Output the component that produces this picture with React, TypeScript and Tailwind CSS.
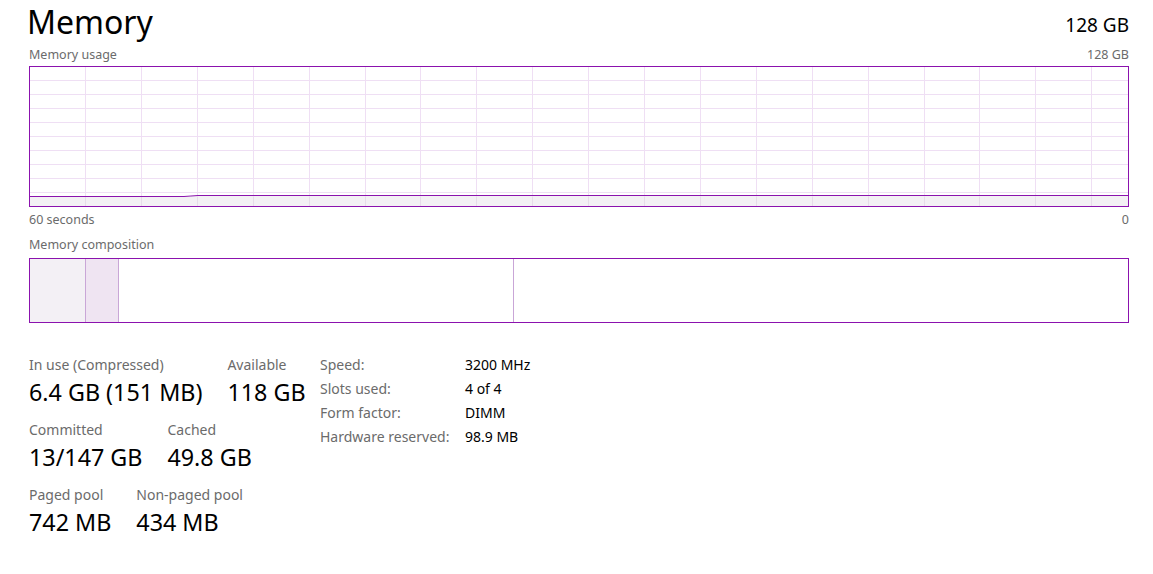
const FONT = "font-['Segoe_UI','Noto_Sans',sans-serif]";

function UsageChart() {
  const vLines = Array.from({ length: 19 }, (_, i) => 55.5 + Math.round(i * 55.9));
  const hLines = Array.from({ length: 9 }, (_, i) => 13.5 + i * 14);
  return (
    <svg
      width="1098"
      height="139"
      viewBox="0 0 1098 139"
      className="block"
      shapeRendering="crispEdges"
    >
      {/* fill below the usage line */}
      <path d="M0 130 L154 130 L168 129 L1098 129 L1098 139 L0 139 Z" fill="#f3f0f4" />
      {hLines.map((y) => (
        <line key={y} x1="0" x2="1098" y1={y} y2={y} stroke="#efdff4" strokeWidth="1" />
      ))}
      {vLines.map((x) => (
        <line key={x} x1={x} x2={x} y1="0" y2="139" stroke="#efdff4" strokeWidth="1" />
      ))}
      {vLines.map((x) => (
        <line key={`f${x}`} x1={x} x2={x} y1="130" y2="139" stroke="#e6dce9" strokeWidth="1" />
      ))}
      <path
        d="M0 129.5 L154 129.5 L168 128.5 L1098 128.5"
        fill="none"
        stroke="#8b12ae"
        strokeWidth="1"
        shapeRendering="auto"
      />
    </svg>
  );
}

function Stat({ label, value }: { label: string; value: string }) {
  return (
    <div className="flex flex-col">
      <div className="h-[24px] text-[14px] leading-[24px] text-[#6b6b6b] whitespace-nowrap">{label}</div>
      <div className="h-[41px] text-[23.3px] leading-[30px] text-black whitespace-nowrap">{value}</div>
    </div>
  );
}

const SPECS = [
  ["Speed:", "3200 MHz"],
  ["Slots used:", "4 of 4"],
  ["Form factor:", "DIMM"],
  ["Hardware reserved:", "98.9 MB"],
];

export default function App() {
  return (
    <div className={`w-[1153px] h-[574px] bg-white pl-[29px] pr-[24px] ${FONT}`}>
      {/* Header */}
      <div className="flex items-end justify-between h-[44px]">
        <h1 className="text-[32px] leading-[44px] text-black -ml-[2px] -mt-[8px]">Memory</h1>
        <span className="text-[19px] leading-[30px] text-black mb-[4px]">128 GB</span>
      </div>

      <div className="flex justify-between h-[22px] text-[12.5px] leading-[21px] text-[#6b6b6b]">
        <span>Memory usage</span>
        <span>128 GB</span>
      </div>

      <div className="border border-[#8b12ae] h-[141px] overflow-hidden">
        <UsageChart />
      </div>

      <div className="flex justify-between h-[25px] text-[12.5px] leading-[25px] text-[#6b6b6b]">
        <span>60 seconds</span>
        <span>0</span>
      </div>

      <div className="h-[26px] text-[12.5px] leading-[25px] text-[#6b6b6b]">Memory composition</div>

      {/* Composition bar */}
      <div className="flex border border-[#8b12ae] h-[65px]">
        <div className="w-[55px] bg-[#f3f0f5]" />
        <div className="w-[33px] bg-[#efe4f2] border-l border-[#c9a6d7]" />
        <div className="w-[395px] border-l border-[#c9a6d7]" />
        <div className="flex-1 border-l border-[#c9a6d7]" />
      </div>

      {/* Stats */}
      <div className="flex mt-[30px]">
        <div className="w-[291px] flex flex-col">
          <div className="flex gap-[25px]">
            <Stat label="In use (Compressed)" value="6.4 GB (151 MB)" />
            <Stat label="Available" value="118 GB" />
          </div>
          <div className="flex gap-[25px]">
            <Stat label="Committed" value="13/147 GB" />
            <Stat label="Cached" value="49.8 GB" />
          </div>
          <div className="flex gap-[25px]">
            <Stat label="Paged pool" value="742 MB" />
            <Stat label="Non-paged pool" value="434 MB" />
          </div>
        </div>

        <div className="flex flex-col text-[14px] leading-[24px]">
          {SPECS.map(([k, v]) => (
            <div key={k} className="flex">
              <span className="w-[145px] text-[#6b6b6b] whitespace-nowrap">{k}</span>
              <span className="text-black">{v}</span>
            </div>
          ))}
        </div>
      </div>
    </div>
  );
}
